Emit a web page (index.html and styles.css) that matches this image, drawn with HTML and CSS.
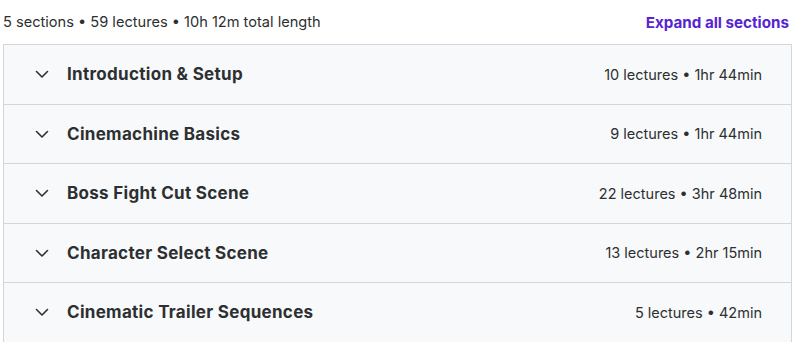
FILE: index.html
```html
<!DOCTYPE html>
<html lang="en">
<head>
<meta charset="utf-8">
<title>Course content</title>
<link rel="stylesheet" href="styles.css">
</head>
<body>
<div class="curriculum">
  <div class="summary">
    <span class="summary-text">5 sections • 59 lectures • 10h 12m total length</span>
    <button class="expand">Expand all sections</button>
  </div>
  <div class="sections">
    <div class="section">
      <svg class="chev" viewBox="0 0 16 16" width="16" height="16"><path d="M2.5 5.5 L8 11 L13.5 5.5" /></svg>
      <span class="title">Introduction &amp; Setup</span>
      <span class="meta">10 lectures • 1hr 44min</span>
    </div>
    <div class="section">
      <svg class="chev" viewBox="0 0 16 16" width="16" height="16"><path d="M2.5 5.5 L8 11 L13.5 5.5" /></svg>
      <span class="title">Cinemachine Basics</span>
      <span class="meta">9 lectures • 1hr 44min</span>
    </div>
    <div class="section">
      <svg class="chev" viewBox="0 0 16 16" width="16" height="16"><path d="M2.5 5.5 L8 11 L13.5 5.5" /></svg>
      <span class="title">Boss Fight Cut Scene</span>
      <span class="meta">22 lectures • 3hr 48min</span>
    </div>
    <div class="section">
      <svg class="chev" viewBox="0 0 16 16" width="16" height="16"><path d="M2.5 5.5 L8 11 L13.5 5.5" /></svg>
      <span class="title">Character Select Scene</span>
      <span class="meta">13 lectures • 2hr 15min</span>
    </div>
    <div class="section">
      <svg class="chev" viewBox="0 0 16 16" width="16" height="16"><path d="M2.5 5.5 L8 11 L13.5 5.5" /></svg>
      <span class="title">Cinematic Trailer Sequences</span>
      <span class="meta">5 lectures • 42min</span>
    </div>
  </div>
</div>
</body>
</html>
```

FILE: styles.css
```css
html, body {
  margin: 0;
  padding: 0;
  background: #ffffff;
}
body {
  font-family: "Inter", "Noto Sans", sans-serif;
  color: #2d2f31;
  overflow: hidden;
  height: 342px;
}
.curriculum {
  padding: 0 3px;
}
.summary {
  height: 44px;
  display: flex;
  align-items: center;
  justify-content: space-between;
}
.summary-text {
  font-size: 14.6px;
  color: #2d2f31;
}
.expand {
  border: 0;
  background: none;
  padding: 0 3px 0 0;
  font-family: inherit;
  font-size: 15.2px;
  font-weight: 700;
  color: #5624d0;
  cursor: pointer;
}
.sections {
  border: 1px solid #d1d7dc;
  border-bottom: 0;
}
.section {
  box-sizing: border-box;
  height: 59.5px;
  display: flex;
  align-items: center;
  padding: 0 29px 0 30px;
  background: #f7f9fa;
  border-bottom: 1px solid #d1d7dc;
}
.chev {
  flex: none;
  fill: none;
  stroke: #2d2f31;
  stroke-width: 1.6;
  stroke-linecap: round;
  stroke-linejoin: round;
}
.title {
  margin-left: 17px;
  font-size: 17px;
  letter-spacing: 0.3px;
  font-weight: 700;
  flex: 1;
}
.meta {
  font-size: 14.5px;
}
```
